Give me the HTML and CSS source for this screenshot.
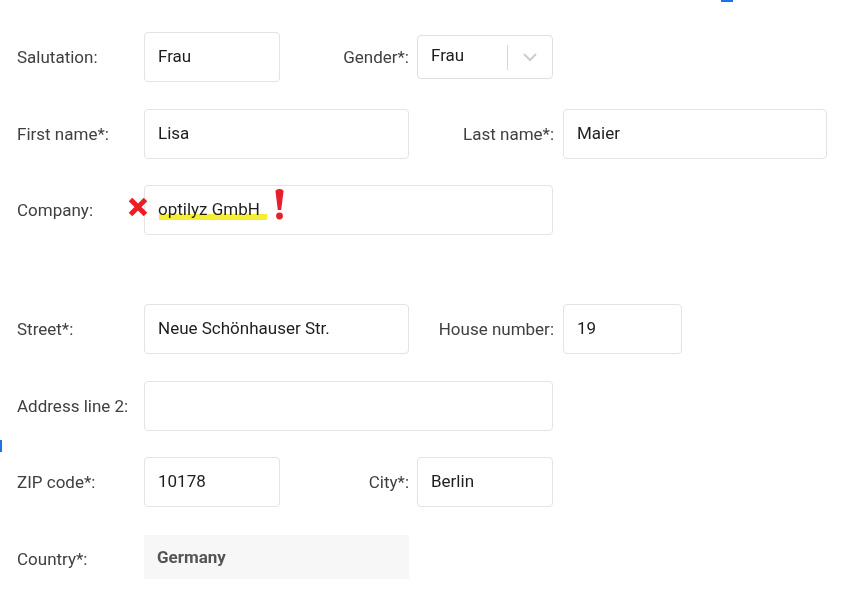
FILE: index.html
```html
<html>
    <head>
        <meta charset="utf-8">
        <link rel="stylesheet" href="styles.css">
    </head>
    <body>
        <div class="focus-top"></div>
        <div class="focus-left"></div>

        <form class="address" name="address" method="post" action="">

            <div class="row">
                <label class="label">Salutation:</label>
                <input class="input w-sm" type="text" name="salutation" value="Frau">
                <label class="label-right short">Gender*:</label>
                <div class="select w-sm">
                    <span class="select-value">Frau</span>
                    <span class="select-sep"></span>
                    <svg class="select-arrow" width="16" height="10" viewBox="0 0 16 10">
                        <polyline points="2,2 8,8 14,2" fill="none" stroke="#cccccc" stroke-width="2"/>
                    </svg>
                </div>
            </div>

            <div class="row">
                <label class="label">First name*:</label>
                <input class="input w-md" type="text" name="firstName" value="Lisa">
                <label class="label-right long">Last name*:</label>
                <input class="input w-xl" type="text" name="lastName" value="Maier">
            </div>

            <div class="row">
                <label class="label">Company:</label>
                <div class="marked w-lg">
                    <input class="input w-lg" type="text" name="company" value="optilyz GmbH">
                    <svg class="mark-cross" width="20" height="20" viewBox="0 0 20 20">
                        <path d="M2.5 2.5 L17.5 17.5 M17.5 2.5 L2.5 17.5" stroke="#ee1c25" stroke-width="5"/>
                    </svg>
                    <span class="mark-line"></span>
                    <svg class="mark-bang" width="9" height="31" viewBox="0 0 9 31">
                        <path d="M0.5 2.5 Q0.5 0 4.5 0 Q8.5 0 8.5 2.5 L6.2 21 L2.8 21 Z" fill="#e5202b"/>
                        <circle cx="4.5" cy="27" r="3.4" fill="#e5202b"/>
                    </svg>
                </div>
            </div>

            <div class="spacer"></div>

            <div class="row">
                <label class="label">Street*:</label>
                <input class="input w-md" type="text" name="street" value="Neue Schönhauser Str.">
                <label class="label-right long">House number:</label>
                <input class="input w-xs" type="text" name="houseNumber" value="19">
            </div>

            <div class="row">
                <label class="label">Address line 2:</label>
                <input class="input w-lg" type="text" name="addressLine2" value="">
            </div>

            <div class="row">
                <label class="label">ZIP code*:</label>
                <input class="input w-sm" type="text" name="zip" value="10178">
                <label class="label-right short">City*:</label>
                <input class="input w-sm" type="text" name="city" value="Berlin">
            </div>

            <div class="row">
                <label class="label">Country*:</label>
                <div class="readonly w-md">Germany</div>
            </div>

        </form>
    </body>
</html>
```

FILE: styles.css
```css
body {
    margin: 0;
    font-family: Roboto, "Liberation Sans", sans-serif;
    font-size: 17px;
    color: #3a3a3a;
    background: #ffffff;
}

.focus-top {
    position: absolute;
    left: 721px;
    top: 0;
    width: 12px;
    height: 2px;
    background: #1a73e8;
}

.focus-left {
    position: absolute;
    left: 0;
    top: 440px;
    width: 2px;
    height: 12px;
    background: #1a73e8;
}

.address {
    margin: 0;
    padding: 32px 0 0 17px;
}

.row {
    display: flex;
    align-items: center;
    height: 50px;
    margin-bottom: 26.5px;
}

.spacer {
    height: 42.5px;
}

.label {
    width: 127px;
    flex-shrink: 0;
    color: #404040;
}

.label-right {
    flex-shrink: 0;
    text-align: right;
    color: #404040;
}

.label-right.short {
    width: 129px;
    margin-right: 8px;
}

.label-right.long {
    width: 145px;
    margin-right: 9px;
}

.input {
    box-sizing: border-box;
    height: 50px;
    border: 1px solid #e3e3e3;
    border-radius: 4px;
    padding: 0 13px 2px 13px;
    font-family: Roboto, "Liberation Sans", sans-serif;
    font-size: 17px;
    color: #1e1e1e;
    background: #ffffff;
    flex-shrink: 0;
}

.input:focus {
    outline: 0;
}

.w-xs { width: 119px; }
.w-sm { width: 136px; }
.w-md { width: 265px; }
.w-lg { width: 409px; }
.w-xl { width: 264px; }

.select {
    box-sizing: border-box;
    height: 44px;
    border: 1px solid #e0e0e0;
    border-radius: 4px;
    display: flex;
    align-items: center;
    padding-left: 13px;
    color: #1e1e1e;
    flex-shrink: 0;
}

.select-value {
    width: 76px;
    margin-top: -4px;
}

.select-sep {
    width: 1px;
    height: 25px;
    background: #d6d6d6;
}

.select-arrow {
    margin-left: 14px;
}

.marked {
    position: relative;
    height: 50px;
    flex-shrink: 0;
}

.mark-cross {
    position: absolute;
    left: -16px;
    top: 12px;
}

.mark-line {
    position: absolute;
    left: 15px;
    top: 29px;
    width: 108px;
    height: 6px;
    background: #f6ee32;
    mix-blend-mode: multiply;
}

.mark-bang {
    position: absolute;
    left: 131px;
    top: 4px;
}

.readonly {
    box-sizing: border-box;
    height: 44px;
    background: #f7f7f7;
    padding: 0 13px;
    display: flex;
    align-items: center;
    font-weight: bold;
    color: #555555;
    flex-shrink: 0;
    align-self: flex-start;
    margin-top: 1.5px;
}
```
